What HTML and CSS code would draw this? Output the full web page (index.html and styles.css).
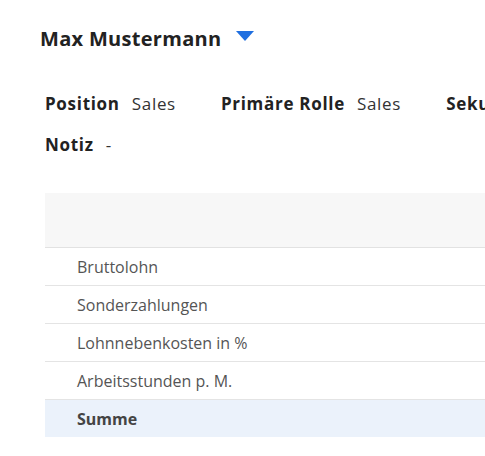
FILE: index.html
```html
<!DOCTYPE html>
<html lang="de">
<head>
<meta charset="utf-8">
<link rel="stylesheet" href="styles.css">
</head>
<body>
<div class="page">
  <div class="title-row">
    <h1 class="name">Max Mustermann</h1>
    <span class="caret"></span>
  </div>
  <div class="info">
    <div class="info-line">
      <div class="item"><span class="label">Position</span><span class="value">Sales</span></div>
      <div class="item"><span class="label">Primäre Rolle</span><span class="value">Sales</span></div>
      <div class="item"><span class="label">Sekundäre Rolle</span><span class="value">-</span></div>
    </div>
    <div class="info-line">
      <div class="item"><span class="label">Notiz</span><span class="value">-</span></div>
    </div>
  </div>
  <div class="table">
    <div class="thead"></div>
    <div class="row">Bruttolohn</div>
    <div class="row">Sonderzahlungen</div>
    <div class="row">Lohnnebenkosten in %</div>
    <div class="row">Arbeitsstunden p. M.</div>
    <div class="row sum">Summe</div>
  </div>
</div>
</body>
</html>
```
FILE: styles.css
```css
html, body {
  margin: 0;
  padding: 0;
  overflow: hidden;
  background: #fff;
}
body {
  font-family: "Open Sans", "Noto Sans", sans-serif;
  color: #333;
}
.page {
  padding: 24px 0 0 40px;
  width: 700px;
}
.title-row {
  display: flex;
  align-items: center;
  gap: 15px;
  height: 28px;
}
.name {
  margin: 0;
  font-size: 20px;
  font-weight: 700;
  color: #222;
  letter-spacing: 0.3px;
}
.caret {
  width: 0;
  height: 0;
  border-left: 9px solid transparent;
  border-right: 9px solid transparent;
  border-top: 10px solid #1f6fe0;
  margin-top: -4px;
}
.info {
  padding: 40px 0 0 5px;
  display: flex;
  flex-direction: column;
  gap: 18px;
}
.info-line {
  display: flex;
  gap: 45px;
  white-space: nowrap;
  height: 23px;
  align-items: center;
}
.item {
  display: flex;
  gap: 12px;
  font-size: 17px;
  letter-spacing: 0.7px;
}
.label {
  font-weight: 700;
  color: #222;
}
.value {
  color: #333;
}
.table {
  margin: 37px 0 0 5px;
}
.thead {
  height: 54px;
  background: #f7f7f7;
  border-bottom: 1px solid #e2e2e2;
}
.row {
  height: 37px;
  border-bottom: 1px solid #e4e4e4;
  display: flex;
  align-items: center;
  padding-left: 32px;
  font-size: 16px;
  color: #555;
}
.row.sum {
  background: #ebf2fb;
  border-bottom: none;
  font-weight: 700;
  color: #444;
}
```
